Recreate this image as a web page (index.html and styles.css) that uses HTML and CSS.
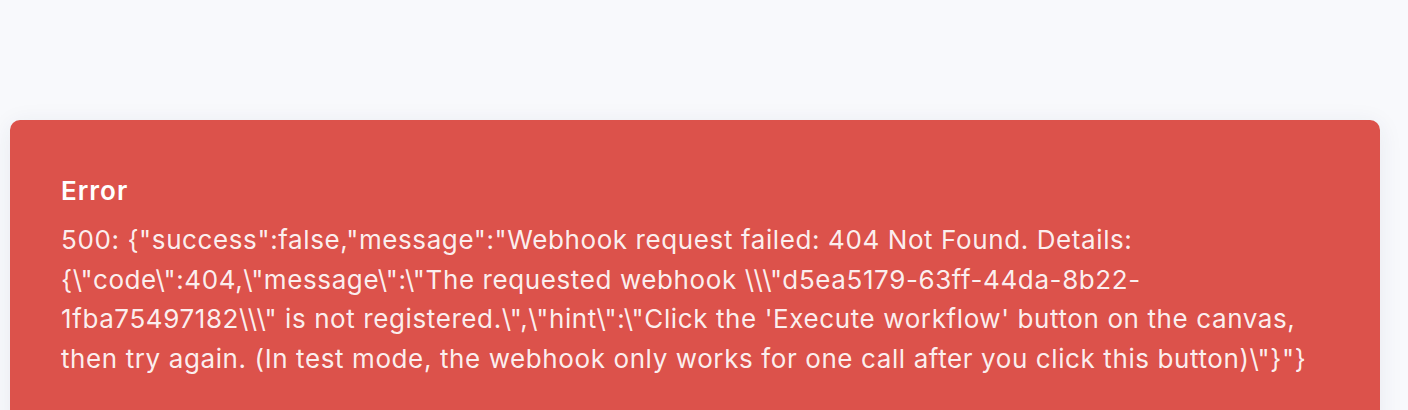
FILE: index.html
```html
<!DOCTYPE html>
<html>
<head>
<meta charset="utf-8">
<link rel="stylesheet" href="styles.css">
</head>
<body>
<div class="page">
  <div class="alert">
    <div class="alert-title">Error</div>
    <div class="alert-body">500: {"success":false,"message":"Webhook request failed: 404 Not Found. Details: {\"code\":404,\"message\":\"The requested webhook \\\"d5ea5179-63ff-44da-8b22-1fba75497182\\\" is not registered.\",\"hint\":\"Click the 'Execute workflow' button on the canvas, then try again. (In test mode, the webhook only works for one call after you click this button)\"}"}</div>
  </div>
</div>
</body>
</html>
```

FILE: styles.css
```css
html, body {
  margin: 0;
  padding: 0;
  background: #f8f9fc;
  overflow: hidden;
}
.page {
  padding: 120px 28px 0 10px;
  font-family: Inter, "Noto Sans", sans-serif;
}
.alert {
  background: #dc524b;
  border-radius: 10px;
  padding: 55px 51px 60px 51px;
  box-shadow: 0 4px 24px rgba(40, 50, 90, 0.08);
  min-height: 300px;
}
.alert-title {
  color: #ffffff;
  font-size: 26px;
  font-weight: 600;
  line-height: 32px;
  letter-spacing: 1px;
  margin-bottom: 13px;
}
.alert-body {
  color: rgba(255, 255, 255, 0.92);
  font-size: 26px;
  line-height: 39.5px;
  letter-spacing: 0.6px;
}
```
